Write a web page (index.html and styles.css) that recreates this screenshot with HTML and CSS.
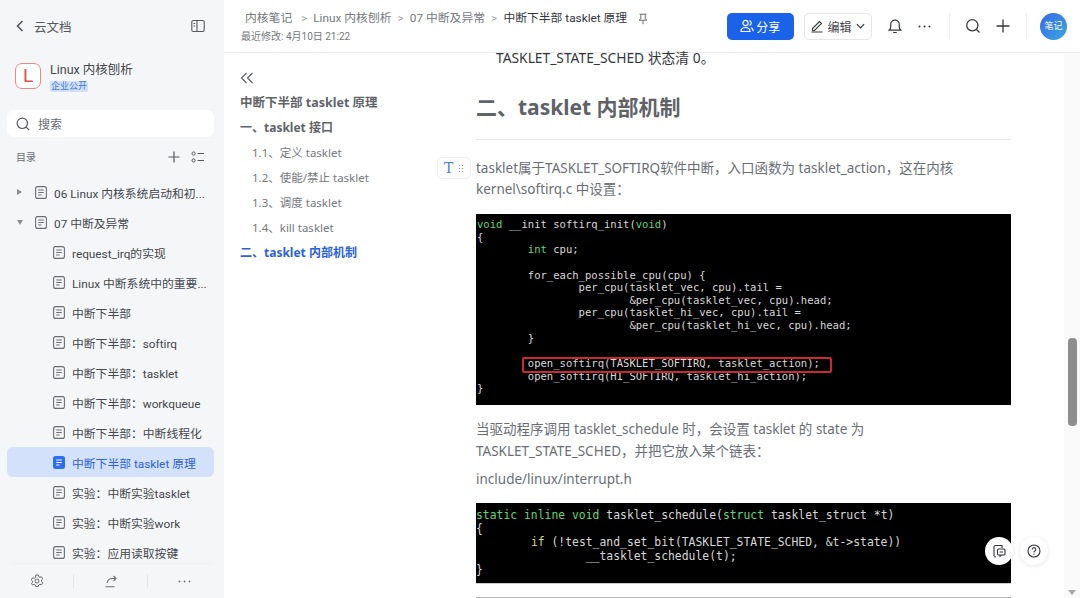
FILE: index.html
```html
<!DOCTYPE html>
<html lang="zh">
<head>
<meta charset="utf-8">
<title>中断下半部 tasklet 原理</title>
<link rel="stylesheet" href="styles.css">
</head>
<body>
<svg class="defs" width="0" height="0" aria-hidden="true">
  <symbol id="doc" viewBox="0 0 12 13"><rect x=".6" y=".6" width="10.8" height="11.8" rx="2" fill="none" stroke="currentColor" stroke-width="1.1"/><path d="M3.2 4h5.6M3.2 6.5h5.6M3.2 9h3.4" fill="none" stroke="currentColor" stroke-width="1.1"/></symbol>
</svg>
<div class="app">
  <aside class="side">
    <div class="side-top">
      <svg class="ic16" viewBox="0 0 16 16"><path d="M10.5 3 5.5 8l5 5" fill="none" stroke="#4a4d52" stroke-width="1.5"/></svg>
      <span class="side-title">云文档</span>
      <svg class="ic14 push" viewBox="0 0 14 14"><rect x=".8" y="1.5" width="12.4" height="11" rx="1.5" fill="none" stroke="#55585e" stroke-width="1.1"/><path d="M6 1.5v11M2.5 4.5h1.8M2.5 7h1.8" fill="none" stroke="#55585e" stroke-width="1.1"/></svg>
    </div>
    <div class="kb">
      <div class="kb-logo">L</div>
      <div>
        <div class="kb-name">Linux 内核刨析</div>
        <div class="kb-tag">企业公开</div>
      </div>
    </div>
    <div class="search">
      <svg class="ic16" viewBox="0 0 16 16"><circle cx="7.3" cy="7.3" r="5.2" fill="none" stroke="#55585e" stroke-width="1.2"/><path d="m11.2 11.2 3 3" stroke="#55585e" stroke-width="1.2"/></svg>
      <span>搜索</span>
    </div>
    <div class="toc-head">
      <span>目录</span>
      <svg class="ic14 push" viewBox="0 0 14 14"><path d="M7 1.5v11M1.5 7h11" stroke="#55585e" stroke-width="1.2"/></svg>
      <svg class="ic14" viewBox="0 0 14 14"><circle cx="2.6" cy="3.5" r="1.6" fill="none" stroke="#55585e"/><circle cx="2.6" cy="10.5" r="1.6" fill="none" stroke="#55585e"/><path d="M6.5 3.5h6.5M6.5 10.5h6.5" stroke="#55585e" stroke-width="1.1"/></svg>
    </div>
    <ul class="tree">
      <li class="row lv1"><i class="tri tri-r"></i><svg class="doc"><use href="#doc"/></svg><span class="lbl">06 Linux 内核系统启动和初...</span></li>
      <li class="row lv1"><i class="tri tri-d"></i><svg class="doc"><use href="#doc"/></svg><span class="lbl">07 中断及异常</span></li>
      <li class="row lv2"><svg class="doc"><use href="#doc"/></svg><span class="lbl">request_irq的实现</span></li>
      <li class="row lv2"><svg class="doc"><use href="#doc"/></svg><span class="lbl">Linux 中断系统中的重要...</span></li>
      <li class="row lv2"><svg class="doc"><use href="#doc"/></svg><span class="lbl">中断下半部</span></li>
      <li class="row lv2"><svg class="doc"><use href="#doc"/></svg><span class="lbl">中断下半部：softirq</span></li>
      <li class="row lv2"><svg class="doc"><use href="#doc"/></svg><span class="lbl">中断下半部：tasklet</span></li>
      <li class="row lv2"><svg class="doc"><use href="#doc"/></svg><span class="lbl">中断下半部：workqueue</span></li>
      <li class="row lv2"><svg class="doc"><use href="#doc"/></svg><span class="lbl">中断下半部：中断线程化</span></li>
      <li class="row lv2 active"><svg class="doc" viewBox="0 0 12 13"><rect width="12" height="13" rx="2.5" fill="#2b6ef2"/><path d="M3.2 4h5.6M3.2 6.5h5.6M3.2 9h3.4" stroke="#fff" stroke-width="1.2"/></svg><span class="lbl">中断下半部 tasklet 原理</span></li>
      <li class="row lv2"><svg class="doc"><use href="#doc"/></svg><span class="lbl">实验：中断实验tasklet</span></li>
      <li class="row lv2"><svg class="doc"><use href="#doc"/></svg><span class="lbl">实验：中断实验work</span></li>
      <li class="row lv2"><svg class="doc"><use href="#doc"/></svg><span class="lbl">实验：应用读取按键</span></li>
    </ul>
    <div class="side-foot">
      <div class="foot-cell"><svg class="ic14" viewBox="0 0 14 14"><path d="M5.8 1h2.400l.4 1.600 1.300.7 1.600-.5 1.200 2.100-1.200 1.100v1.600l1.200 1.100-1.200 2.100-1.600-.5-1.300.7-.4 1.600H5.800l-.4-1.600-1.300-.7-1.600.5L1.300 9.700l1.200-1.100V7L1.300 5.900l1.200-2.100 1.600.5 1.300-.7z" fill="none" stroke="#6a6d72" stroke-width="1" stroke-linejoin="round"/><circle cx="7" cy="7" r="2" fill="none" stroke="#6a6d72" stroke-width="1"/></svg></div>
      <div class="foot-cell"><svg class="ic14" viewBox="0 0 14 14"><path d="M3 9c.6-3 2.800-4.500 5.500-4.500h3M9.500 2 12 4.500 9.500 7M1.500 12.800h9" fill="none" stroke="#6a6d72" stroke-width="1.100"/></svg></div>
      <div class="foot-cell"><svg class="dots3" viewBox="0 0 13 3"><circle cx="1.500" cy="1.500" r=".9" fill="#6a6d72"/><circle cx="6.500" cy="1.500" r=".9" fill="#6a6d72"/><circle cx="11.500" cy="1.500" r=".9" fill="#6a6d72"/></svg></div>
    </div>
  </aside>
  <main class="main">
    <header class="top">
      <div class="crumbs">
        <div class="path">
          <span>内核笔记</span><b class="sep sep-first">&gt;</b><span>Linux 内核刨析</span><b class="sep">&gt;</b><span>07 中断及异常</span><b class="sep">&gt;</b><span class="cur">中断下半部 tasklet 原理</span>
          <svg class="pin" viewBox="0 0 12 12"><path d="M2.500 1.200h7M3.800 1.200v4.600L2 7.200h8L8.200 5.800V1.200M6 7.200v4" fill="none" stroke="#6a6d72"/></svg>
        </div>
        <div class="mod">最近修改: 4月10日 21:22</div>
      </div>
      <button class="share"><svg class="ic14" viewBox="0 0 14 14"><circle cx="5.500" cy="4" r="2.600" fill="none" stroke="#fff" stroke-width="1.200"/><path d="M1 12.500c0-2.600 2-4 4.500-4s4.500 1.400 4.500 4zM9.600 1.600a2.600 2.600 0 0 1 0 4.800M11 8.600c1.300.5 2.200 1.800 2.200 3.600" fill="none" stroke="#fff" stroke-width="1.200"/></svg>分享</button>
      <button class="edit"><svg class="ic14" viewBox="0 0 14 14"><path d="M2.500 9.500 9.500 2.500l2 2-7 7H2.500zM1.500 13h11" fill="none" stroke="#33363b" stroke-width="1.100"/></svg>编辑<svg class="caret" viewBox="0 0 10 6"><path d="m1 1 4 4 4-4" fill="none" stroke="#33363b" stroke-width="1.300"/></svg></button>
      <svg class="ic16 bell" viewBox="0 0 16 16"><path d="M2.200 12.200c1-.9 1.500-2 1.500-3.500V6.500a4.300 4.300 0 0 1 8.600 0v2.200c0 1.500.5 2.600 1.500 3.500zM6.200 14.500h3.600" fill="none" stroke="#33363b" stroke-width="1.200"/></svg>
      <svg class="dots3 more" viewBox="0 0 13 3"><circle cx="1.500" cy="1.500" r="1" fill="#33363b"/><circle cx="6.500" cy="1.500" r="1" fill="#33363b"/><circle cx="11.500" cy="1.500" r="1" fill="#33363b"/></svg>
      <i class="vr"></i>
      <svg class="ic16" viewBox="0 0 16 16"><circle cx="7.300" cy="7.300" r="5.600" fill="none" stroke="#33363b" stroke-width="1.300"/><path d="m11.500 11.500 3 3" stroke="#33363b" stroke-width="1.300"/></svg>
      <svg class="ic16 plus" viewBox="0 0 16 16"><path d="M8 1.500v13M1.500 8h13" stroke="#33363b" stroke-width="1.300"/></svg>
      <i class="vr vr2"></i>
      <div class="avatar">笔记</div>
    </header>
    <div class="body">
      <nav class="outline">
        <svg class="collapse" viewBox="0 0 14 12"><path d="M6.500 1 1.500 6l5 5M12.500 1l-5 5 5 5" fill="none" stroke="#55585e" stroke-width="1.100"/></svg>
        <div class="o-title">中断下半部 tasklet 原理</div>
        <div class="o-h1">一、tasklet 接口</div>
        <div class="o-h2">1.1、定义 tasklet</div>
        <div class="o-h2">1.2、使能/禁止 tasklet</div>
        <div class="o-h2">1.3、调度 tasklet</div>
        <div class="o-h2">1.4、kill tasklet</div>
        <div class="o-h1 o-cur">二、tasklet 内部机制</div>
      </nav>
      <article class="doc-body">
        <p class="li-tail">TASKLET_STATE_SCHED 状态清 0。</p>
        <h2>二、tasklet 内部机制</h2>
        <hr>
        <p class="p1">tasklet属于TASKLET_SOFTIRQ软件中断，入口函数为 tasklet_action，这在内核 kernel\softirq.c 中设置：</p>
        <div class="code c1"><pre><em>void</em> __init softirq_init(<em>void</em>)
{
        <em>int</em> cpu;

        for_each_possible_cpu(cpu) {
                per_cpu(tasklet_vec, cpu).tail =
                        &amp;per_cpu(tasklet_vec, cpu).head;
                per_cpu(tasklet_hi_vec, cpu).tail =
                        &amp;per_cpu(tasklet_hi_vec, cpu).head;
        }

        open_softirq(TASKLET_SOFTIRQ, tasklet_action);
        open_softirq(HI_SOFTIRQ, tasklet_hi_action);
}</pre><i class="mark"></i></div>
        <p class="p2">当驱动程序调用 tasklet_schedule 时，会设置 tasklet 的 state 为 TASKLET_STATE_SCHED，并把它放入某个链表：</p>
        <p class="p3">include/linux/interrupt.h</p>
        <div class="code c2"><pre><em>static inline void</em> tasklet_schedule(<em>struct</em> tasklet_struct *t)
{
        <u>if</u> (!test_and_set_bit(TASKLET_STATE_SCHED, &amp;t-&gt;state))
                __tasklet_schedule(t);
}</pre></div>
        <div class="code c3"></div>
      </article>
      <div class="scroll"><i class="thumb"></i><i class="arrow"></i></div>
      <div class="floats">
        <div class="fab"><svg class="ic14" viewBox="0 0 14 14"><path d="M2 12V3a1.500 1.500 0 0 1 1.500-1.500H10V4" fill="none" stroke="#33363b" stroke-width="1.100"/><path d="M2 12.800h2" stroke="#33363b"/><rect x="5.500" y="5" width="7.500" height="6" rx="1" fill="none" stroke="#33363b" stroke-width="1.100"/><path d="M8 11v1.800l1.500-1.800M7.500 8h3.500" fill="none" stroke="#33363b"/></svg></div>
        <div class="fab"><svg class="ic14" viewBox="0 0 14 14"><circle cx="7" cy="7" r="6" fill="none" stroke="#33363b" stroke-width="1.100"/><path d="M5.200 5.500a1.800 1.800 0 1 1 2.600 1.600c-.6.300-.8.700-.8 1.300M7 9.700v1" fill="none" stroke="#33363b" stroke-width="1.100"/></svg></div>
      </div>
      <div class="handle"><span>T</span><i class="grip"></i></div>
    </div>
  </main>
</div>
</body>
</html>
```
FILE: styles.css
```css
* { box-sizing: border-box; }
html, body { margin: 0; height: 100%; overflow: hidden; }
body { font-family: Roboto, "Noto Sans CJK SC", sans-serif; color: #33363b; background: #fff; }
.defs { position: absolute; }
.app { display: flex; height: 598px; width: 1080px; }
svg { flex: none; display: block; }
.ic16 { width: 16px; height: 16px; }
.ic14 { width: 14px; height: 14px; }
.dots3 { width: 13px; height: 3px; }
.push { margin-left: auto; }

.side { width: 224px; flex: none; background: #f5f6f8; display: flex; flex-direction: column; overflow: hidden; position: relative; }
.side-top { display: flex; align-items: center; height: 52px; padding: 0 19px 0 12px; }
.side-title { font-size: 12.5px; margin-left: 6px; color: #55585e; }
.kb { display: flex; gap: 9px; padding: 9px 0 0 15px; height: 58px; }
.kb-logo { width: 26px; height: 26px; margin-top: 2px; border: 1px solid #e58a86; border-radius: 7px; background: #fff; color: #d9534f; font-size: 19px; line-height: 24px; text-align: center; }
.kb-name { font-size: 12.5px; line-height: 17px; color: #44474c; }
.kb-tag { width: 38px; margin-top: 3px; font-size: 9px; line-height: 11px; text-align: center; color: #3f78e8; background: #d3e1fb; border-radius: 2px; }
.search { display: flex; align-items: center; gap: 7px; margin: 0 10px 0 7px; height: 27px; padding-left: 8px; border-radius: 7px; background: #fff; font-size: 12px; color: #6a6d72; }
.toc-head { display: flex; align-items: center; gap: 10px; height: 40px; padding: 0 19px 1px 16px; font-size: 10px; color: #6a6d72; }
.tree { list-style: none; margin: 0; padding: 0; flex: 1; overflow: hidden; }
.row { display: flex; align-items: center; height: 30px; margin: 0 10px 0 7px; font-size: 11.8px; color: #44474c; white-space: nowrap; border-radius: 6px; }
.doc { width: 12px; height: 13px; color: #6a6d72; margin-right: 7px; }
.lv1 { padding-left: 28px; position: relative; }
.lv2 { padding-left: 46px; }
.tri { position: absolute; left: 10px; width: 0; height: 0; }
.tri-r { border-left: 5px solid #8a8d92; border-top: 3.5px solid transparent; border-bottom: 3.5px solid transparent; }
.tri-d { border-top: 5px solid #8a8d92; border-left: 3.5px solid transparent; border-right: 3.5px solid transparent; }
.active { background: #d3e1fb; color: #2b62d9; }
.side-foot { display: flex; align-items: center; height: 33px; flex: none; padding-bottom: 1px; background: #f5f6f8; box-shadow: 0 -6px 8px -6px rgba(0,0,0,.03); }
.foot-cell { width: 74px; height: 14px; display: flex; justify-content: center; align-items: center; }
.foot-cell:first-child { width: 73px; }
.foot-cell + .foot-cell { border-left: 1px solid #e4e6e9; }

.main { flex: 1; min-width: 0; display: flex; flex-direction: column; }
.top { height: 53px; flex: none; display: flex; align-items: center; border-bottom: 1px solid #ececee; padding: 0 13px 0 16px; }
.crumbs { width: 487px; flex: none; margin-top: 2px; }
.path { display: flex; align-items: center; font-size: 11.8px; line-height: 17px; color: #75787d; padding-left: 5px; white-space: nowrap; }
.sep { font-weight: 400; font-size: 11px; color: #9a9da1; margin: 0 6.3px; }
.sep-first { margin-left: 9px; }
.cur { color: #33363b; }
.pin { width: 12px; height: 12px; margin-left: 10px; }
.mod { font-size: 10px; line-height: 14px; margin-top: 3px; padding-left: 1px; color: #75787d; }
button { font-family: inherit; display: flex; align-items: center; justify-content: center; }
.share { width: 67px; height: 27px; gap: 2px; background: #1a62ea; color: #fff; border: 0; border-radius: 5px; font-size: 12px; padding: 0; }
.edit { width: 69px; height: 27px; gap: 3px; margin-left: 10px; background: #fff; border: 1px solid #e4e6e9; border-radius: 5px; font-size: 12px; color: #44474c; padding: 0; }
.caret { width: 9px; height: 6px; margin-left: 2px; }
.bell { margin-left: 15px; }
.more { margin-left: 15px; }
.vr { width: 1px; height: 26px; background: #ececee; margin: 0 15px 0 18px; }
.plus { margin-left: 14px; }
.vr2 { margin: 0 13px 0 15px; }
.avatar { width: 27px; height: 27px; border-radius: 50%; background: linear-gradient(135deg, #3a68e4, #38a7e0); color: #fff; font-size: 9px; line-height: 27px; text-align: center; }

.body { flex: 1; min-height: 0; display: flex; position: relative; }
.outline { width: 252px; flex: none; padding: 19px 0 0 16px; font-family: "Noto Sans", "Noto Sans CJK SC", sans-serif; font-size: 11.5px; color: #75787d; }
.collapse { width: 14px; height: 12px; margin-bottom: 6px; }
.o-title { font-weight: 700; font-size: 12.5px; line-height: 25px; color: #5f6368; }
.o-h1 { font-weight: 700; line-height: 25px; color: #5f6368; font-size: 12px; }
.o-h2 { line-height: 25px; padding-left: 12px; }
.o-cur { color: #2b62d9; }
.doc-body { width: 535px; flex: none; font-family: "Noto Sans", "Noto Sans CJK SC", sans-serif; font-size: 13.5px; color: #6a6e74; }
.doc-body p { margin: 0; }
.doc-body .li-tail { padding-left: 20px; color: #33363b; line-height: 10px; font-size: 13.8px; }
.doc-body h2 { margin: 28px 0 0; font-size: 21px; line-height: 32px; color: #5f6368; font-weight: 700; }
.doc-body hr { border: 0; height: 1px; background: #e6e7e9; margin: 16px 0 0; }
.doc-body .p1 { margin-top: 18px; line-height: 21px; }
.code { background: #000; position: relative; color: #d8d8d8; overflow: hidden; }
.code pre { margin: 0; font-family: "DejaVu Sans Mono", monospace; }
.code em { font-style: normal; color: #5fd878; }
.code u { text-decoration: none; color: #d8d878; }
.c1 { height: 191px; padding: 4px 0 0 1px; margin-top: 14px; }
.c1 pre { font-size: 10.55px; line-height: 12.62px; }
.mark { position: absolute; left: 46px; top: 143px; width: 310px; height: 16px; border: 2px solid #cc2a2a; border-radius: 2px; }
.doc-body .p2 { margin-top: 13px; line-height: 22px; }
.doc-body .p3 { margin-top: 6px; line-height: 22px; }
.c2 { height: 81px; padding: 6px 0 0; margin-top: 13px; border-bottom: 1px solid #ccc; }
.c2 pre { font-size: 11.4px; line-height: 13.7px; }
.c3 { height: 20px; margin-top: 13px; border-top: 1px solid #bbb; }
.scroll { position: absolute; right: 0; top: 0; bottom: 0; width: 16px; background: #fafafa; }
.thumb { position: absolute; left: 4px; top: 285px; width: 9px; height: 88px; border-radius: 4px; background: #8e8e8e; }
.arrow { position: absolute; left: 4px; bottom: 3px; border-top: 5px solid #a8a8a8; border-left: 4.5px solid transparent; border-right: 4.5px solid transparent; }
.floats { position: absolute; left: 761px; top: 484px; display: flex; gap: 7px; }
.fab { width: 28px; height: 28px; border-radius: 50%; background: #fff; box-shadow: 0 1px 5px rgba(0,0,0,.1); display: flex; align-items: center; justify-content: center; }
.handle { position: absolute; left: 213px; top: 104px; width: 34px; height: 22px; display: flex; align-items: center; gap: 5px; padding-left: 6px; background: #fff; border: 1px solid #eeeff1; border-radius: 5px; }
.handle span { font-family: "DejaVu Serif", serif; font-size: 14px; color: #4a7be0; line-height: 1; }
.grip { width: 6px; height: 9px; background-image: radial-gradient(circle, #8a8d92 0.8px, transparent 1px); background-size: 3px 3px; }
```
